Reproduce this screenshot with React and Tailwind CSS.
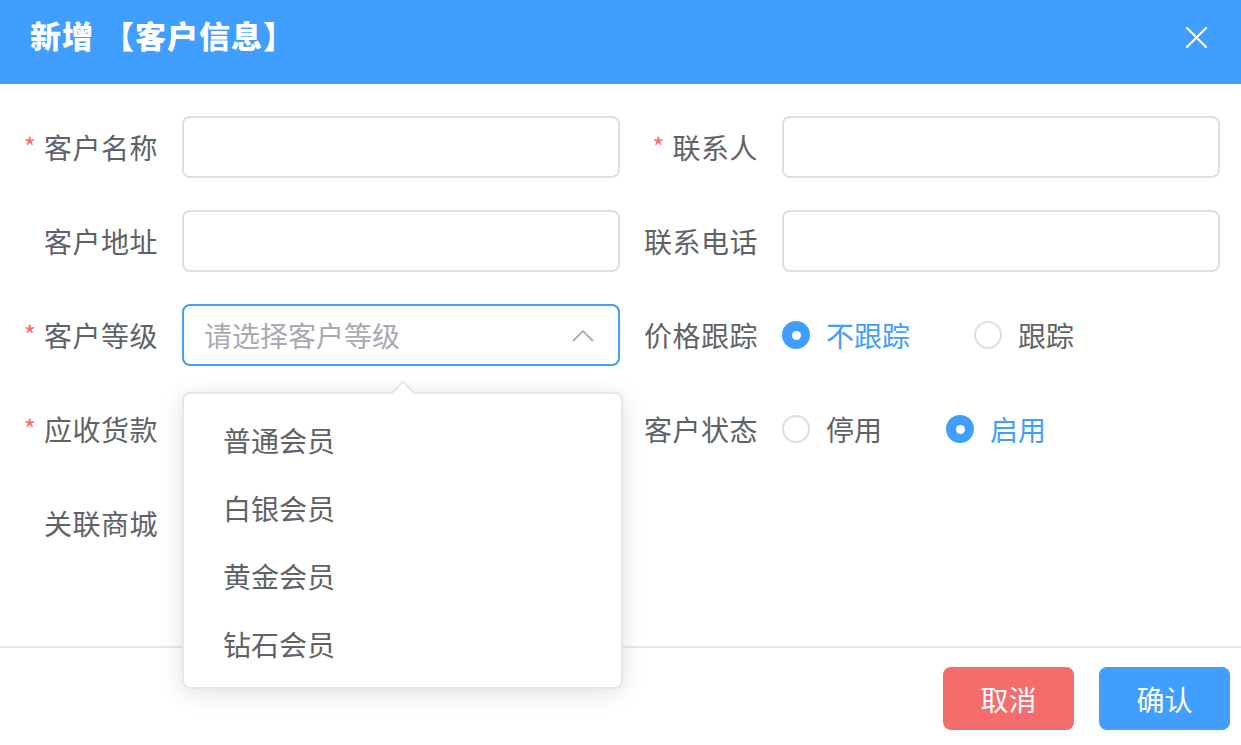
import React from "react";

const font = { fontFamily: '"Noto Sans CJK SC", "Noto Sans", sans-serif' };

function Label({ text, required }) {
  return (
    <div className="w-[161px] shrink-0 pr-[24px] flex items-center justify-end text-[28px] text-[#606266]">
      {required && <span className="text-[#f56c6c] mr-[8px] text-[26px] relative top-[-2px]">*</span>}
      <span className="tracking-[0.5px]">{text}</span>
    </div>
  );
}

function Input() {
  return <div className="w-[438px] h-[62px] rounded-[8px] border-2 border-[#dcdfe6] bg-white" />;
}

function Radio({ label, checked }) {
  return (
    <div className="flex items-center mr-[64px]">
      {checked ? (
        <span className="w-[28px] h-[28px] rounded-full bg-[#409eff] flex items-center justify-center">
          <span className="w-[9px] h-[9px] rounded-full bg-white" />
        </span>
      ) : (
        <span className="w-[28px] h-[28px] rounded-full border-2 border-[#dcdfe6] bg-white" />
      )}
      <span className={"ml-[16px] text-[28px] " + (checked ? "text-[#409eff]" : "text-[#606266]")}>{label}</span>
    </div>
  );
}

function Item({ children }) {
  return <div className="flex items-center h-[62px] w-[600px]">{children}</div>;
}

export default function App() {
  return (
    <div className="w-[1241px] h-[745px] bg-white relative overflow-hidden" style={font}>
      {/* Header */}
      <div className="h-[84px] bg-[#409eff] flex items-center justify-between pl-[30px] pr-[34px] pb-[14px]">
        <div className="text-white text-[31px] font-black flex items-center">
          <span className="tracking-[1px]">新增</span>
          <span className="ml-[9px] tracking-[1px]">【客户信息】</span>
        </div>
        <svg width="21" height="21" viewBox="0 0 22 22" className="mt-[4px]">
          <path d="M1 1 L21 21 M21 1 L1 21" stroke="white" strokeWidth="2.2" strokeLinecap="round" />
        </svg>
      </div>

      {/* Body */}
      <div className="pl-[21px] pt-[32px] pb-[92px] flex flex-col gap-[32px]">
        <div className="flex">
          <Item><Label text="客户名称" required /><Input /></Item>
          <Item><Label text="联系人" required /><Input /></Item>
        </div>
        <div className="flex">
          <Item><Label text="客户地址" /><Input /></Item>
          <Item><Label text="联系电话" /><Input /></Item>
        </div>
        <div className="flex">
          <Item>
            <Label text="客户等级" required />
            <div className="w-[438px] h-[62px] rounded-[8px] border-2 border-[#409eff] bg-white flex items-center justify-between pl-[20px] pr-[24px]">
              <span className="text-[28px] text-[#a8abb2]">请选择客户等级</span>
              <svg width="22" height="13" viewBox="0 0 22 13">
                <path d="M1 12 L11 2 L21 12" stroke="#a8abb2" strokeWidth="1.8" fill="none" />
              </svg>
            </div>
          </Item>
          <Item>
            <Label text="价格跟踪" />
            <Radio label="不跟踪" checked />
            <Radio label="跟踪" />
          </Item>
        </div>
        <div className="flex">
          <Item><Label text="应收货款" required /><Input /></Item>
          <Item>
            <Label text="客户状态" />
            <Radio label="停用" />
            <Radio label="启用" checked />
          </Item>
        </div>
        <div className="flex">
          <Item><Label text="关联商城" /><Input /></Item>
        </div>
      </div>

      {/* Footer */}
      <div className="border-t-2 border-[#e8e8e8] flex justify-end gap-[25px] pt-[19px] pr-[11px]">
        <button className="w-[131px] h-[63px] rounded-[8px] bg-[#f56c6c] text-white text-[28px]">取消</button>
        <button className="w-[131px] h-[63px] rounded-[8px] bg-[#409eff] text-white text-[28px]">确认</button>
      </div>

      {/* Dropdown */}
      <div className="absolute left-[182px] top-[392px] w-[441px] h-[297px] bg-white border-2 border-[#e4e7ed] rounded-[8px] shadow-[0_4px_24px_rgba(0,0,0,0.12)] pt-[12px]">
        <div className="absolute left-[210px] top-[-10px] w-[18px] h-[18px] bg-white border-l-2 border-t-2 border-[#e4e7ed] rotate-45" />
        {["普通会员", "白银会员", "黄金会员", "钻石会员"].map((t) => (
          <div key={t} className="h-[68px] flex items-center pl-[39px] text-[28px] text-[#606266]">{t}</div>
        ))}
      </div>
    </div>
  );
}
